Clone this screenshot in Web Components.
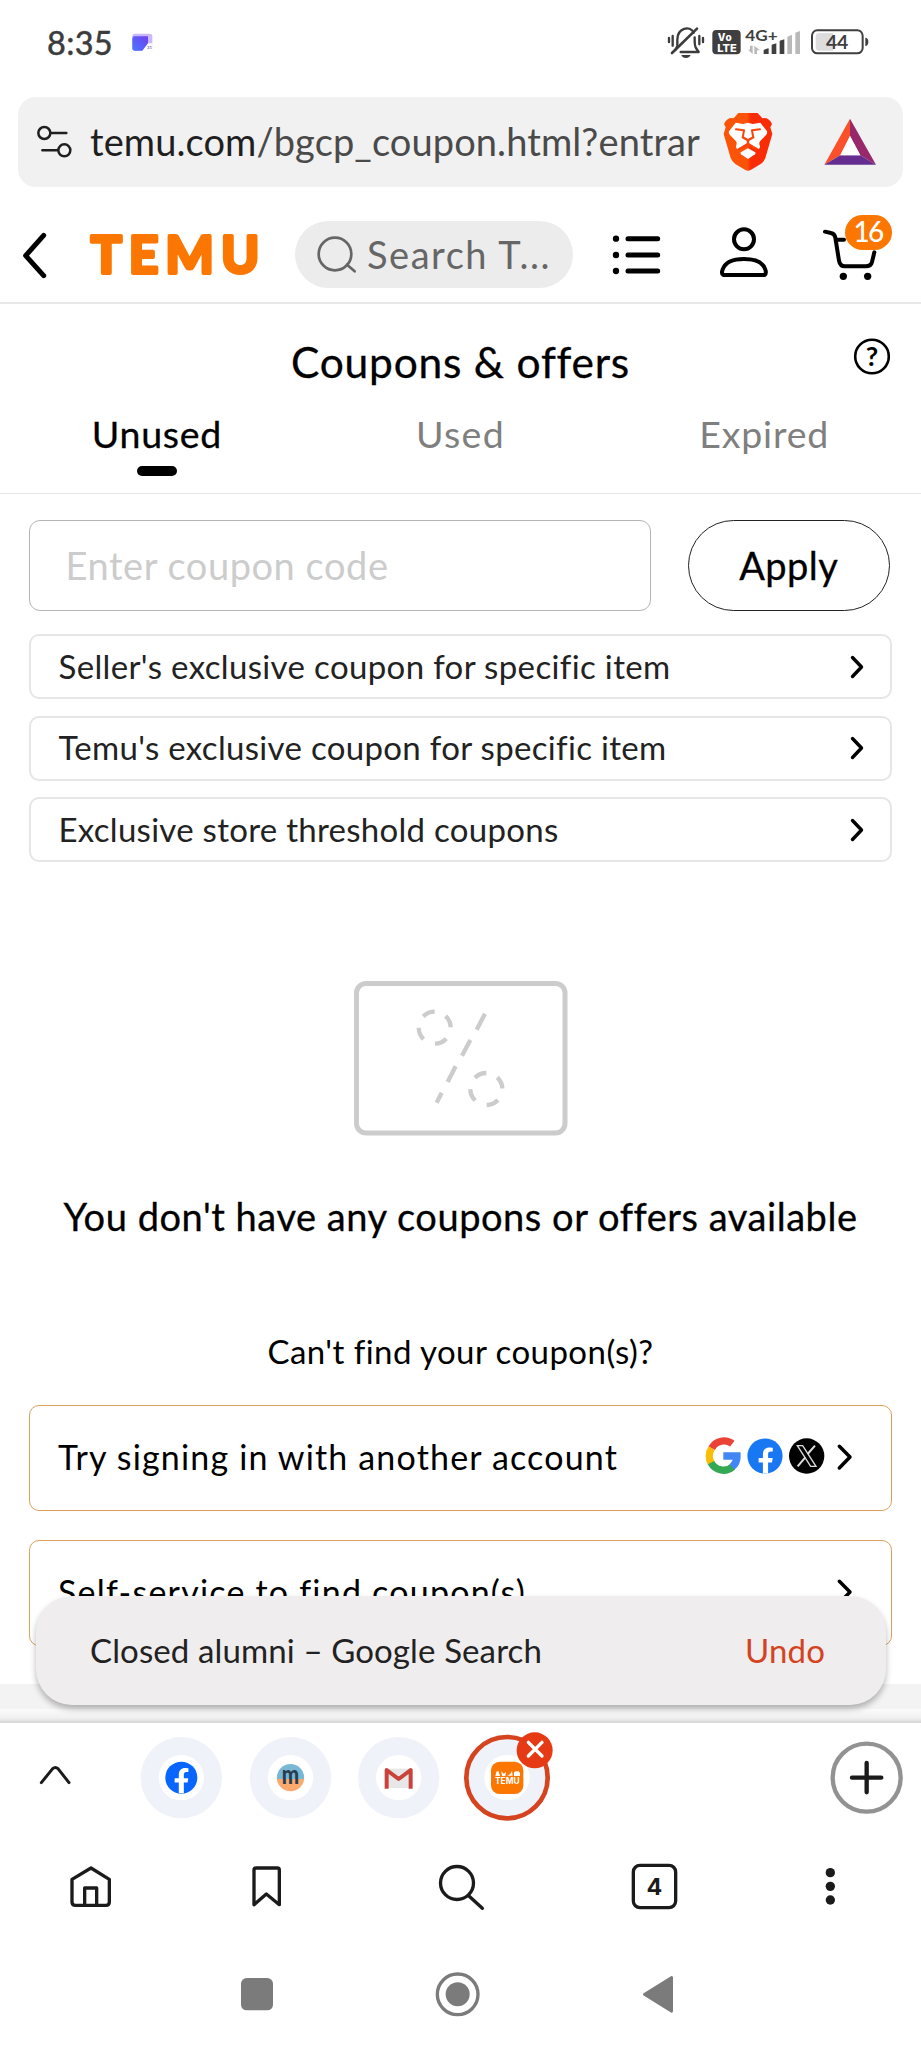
<!DOCTYPE html>
<html lang="en">
<head>
<meta charset="utf-8">
<title>Coupons &amp; offers</title>
<style>
html,body{margin:0;background:#fff}
body{font-family:Lato,"Liberation Sans",sans-serif;width:921px;height:2048px;overflow:hidden}
</style>
</head>
<body>
<phone-screen></phone-screen>
<script>
const TL='<g transform="scale(.33333)">';
const TR='<g transform="translate(460 0) scale(.33333)">';
const BL='<g transform="translate(0 1700) scale(.33333)">';
const BR='<g transform="translate(440 1700) scale(.33333)">';
const SG='<g transform="translate(660 1400) scale(.33333)">';
const S='fill="none" stroke-linecap="round" stroke-linejoin="round"';
const F='M26.5 18.5 25.8 23H21.9V34h-5.2V23h-4.3v-4.5h4.3v-3.6c0-4.6 2.6-7 6.6-7 1.7 0 3.3.3 3.3.3v3.9h-1.9c-2.1 0-2.8 1.2-2.8 2.6v3.8z';
/* name: [x, y, width, height, markup] */
const ICONS={
calendar:[130,0,24,84,TL+'<defs><linearGradient id="c" x1="0" y1="1" x2="1" y2="0"><stop offset="0" stop-color="#4a78ff"/><stop offset="1" stop-color="#7040f0"/></linearGradient></defs><rect x="397" y="101" width="60" height="52" rx="8" fill="#c9b8fa"/><path d="M404 109H444V134L428 152H404Q397 152 397 145V116Q397 109 404 109Z" fill="url(#c)"/><path d="M444 130H458V154H426Z" fill="#fff"/><text x="441" y="147" font-size="13" font-weight="700" fill="#7668b8" font-family="Lato">31</text></g>'],
bell:[665,0,42,84,TR+`<g ${S} stroke="#3c3c3c" stroke-width="7"><path d="M627 114V126M638 108V137M718 108V133M729 114V126"/><path d="M652 136V119C652 84 690 75 701 98M646 150 651 140M662 156H716L708 144Q704 138 704 121V112"/><path d="M711 86 636 159" stroke-width="8"/></g><path d="M664 165H692Q688 174 678 174 667 174 664 165Z" fill="#3c3c3c"/></g>`],
volte:[711,0,31,84,TR+'<rect x="757" y="90" width="85" height="73" rx="12" fill="#3f3f3f"/><g fill="#fff" font-family="Inter" font-weight="800"><text x="773" y="122" font-size="30" textLength="42">Vo</text><text x="772" y="155" font-size="31" textLength="58" lengthAdjust="spacingAndGlyphs">LTE</text></g></g>'],
signal:[744,0,58,84,TR+'<text x="856" y="122" font-family="Lato" font-weight="700" font-size="47" textLength="97" lengthAdjust="spacingAndGlyphs" fill="#3f3f3f">4G+</text><g fill="#404040"><path d="M911 162V150Q920 146 926 145V162ZM935 162V134L949 130V162ZM959 162V122L973 118V162Z"/></g><g fill="#b9b9b9"><path d="M982 162V110L996 104V162ZM1006 162V98L1020 93V162Z"/><path d="M870 137H878V162L864 149H870ZM883 137 900 151H891V162H883Z"/></g></g>'],
battery:[808,0,64,84,TR+'<rect x="1056" y="91" width="152" height="69" rx="16" fill="#fff" stroke="#3f3f3f" stroke-width="6"/><path d="M1078 99H1120V152H1078Q1067 152 1067 141V110Q1067 99 1078 99Z" fill="#ddd"/><path d="M1216 113Q1225 114 1225 125 1225 137 1216 138Z" fill="#3f3f3f"/><text x="1098" y="147" font-family="Lato" font-weight="700" font-size="58" textLength="67" fill="#3f3f3f">44</text></g>'],
tune:[36,97,37,90,TL+`<g ${S} stroke="#1f1f1f" stroke-width="7.5"><circle cx="133" cy="399" r="18"/><path d="M154 399H199M127 451H171"/><circle cx="193" cy="451" r="18"/></g></g>`],
brave:[720,97,56,90,TR+`<defs><linearGradient id="b"><stop offset=".48" stop-color="#fb5308"/><stop offset=".56" stop-color="#fa2c05"/></linearGradient></defs><path d="M835 339H893L907 355Q926 351 936 372L931 382 937 402 916 474Q912 485 902 492L872 510Q864 514 856 510L826 492Q816 485 812 474L791 402 797 382 792 372Q802 351 821 355Z" fill="url(#b)"/><path d="M827 368 850 372 864 368 878 372 901 368 921 394Q923 400 918 405L900 424Q896 430 900 439 901 444 896 447L883 440 868 430 864 428 860 430 845 440 832 447Q827 444 828 439 832 430 828 424L810 405Q805 400 807 394Z" fill="#fff"/><g ${S} stroke="#fb430a" stroke-width="6"><path d="M828 388 852 391 849 408M900 388 876 391 879 408"/><path d="M848 412 864 421 880 412M864 421V432M838 447 864 433 890 447" stroke-width="7"/></g><path d="M864 445 886 457Q888 460 885 463L864 477 843 463Q840 460 842 457Z" fill="#fff"/></g>`],
bat:[820,97,60,90,TR+'<path d="M1170 356V408L1141 466 1093 494Z" fill="#fb512b"/><path d="M1170 356 1248 494 1201 466 1170 408Z" fill="#97286a"/><path d="M1093 494 1141 466H1201L1248 494Z" fill="#662d91"/><path d="M1170 408 1201 466H1141Z" fill="#fff"/></g>'],
back:[20,187,30,115,TL+`<path ${S} stroke="#000" stroke-width="15" d="M131 706 77 767 131 827"/></g>`],
logo:[86,187,176,115,'<text x="91" y="273.3" textLength="168" font-family="Lato" font-weight="700" font-size="51" fill="#fb7701" stroke="#fb7701" stroke-width="4" stroke-linejoin="round">TEMU</text>'],
find:[315,221,42,67,TL+`<g ${S} stroke="#666" stroke-width="8"><circle cx="1005" cy="762" r="49"/><path d="M1041 794 1064 814"/></g></g>`],
list:[610,187,52,115,TR+`<g ${S} stroke="#000" stroke-width="15"><path d="M504 716H593M504 765H593M504 813H593"/></g><circle cx="468" cy="716" r="9.5"/><circle cx="468" cy="765" r="9.5"/><circle cx="468" cy="813" r="9.5"/></g>`],
person:[718,187,52,115,TR+`<g ${S} stroke="#000" stroke-width="12"><circle cx="852" cy="718" r="30"/><path d="M790 825H914Q920 820 916 809C909 787 883 777 852 777S795 787 788 809Q783 820 790 825Z"/></g></g>`],
cart:[820,187,74,115,TR+`<g ${S} stroke="#000" stroke-width="12"><path d="M1095 695 1113 699Q1124 701 1126 713L1137 782Q1140 799 1155 799H1217Q1233 799 1236 786L1243 757M1130 719H1152"/></g><circle cx="1150" cy="829" r="11"/><circle cx="1223" cy="829" r="11"/></g>`],
chev:[846,0,22,64,`<path ${S} stroke="#000" stroke-width="3.4" d="M852.5 22.5 861.5 32 852.5 41.5"/>`],
coupon:[354,981,214,155,`<rect x="356.5" y="983.5" width="208.5" height="149.5" rx="9.5" fill="none" stroke="#ccc" stroke-width="5"/><g transform="translate(330 960) scale(.33333)" fill="none" stroke="#ccc" stroke-width="13"><circle cx="314" cy="203" r="48" stroke-dasharray="37.7 37.7" transform="rotate(-47 314 203)"/><circle cx="469" cy="387" r="48" stroke-dasharray="37.7 37.7" transform="rotate(-47 469 387)"/><path d="M465 161 440 209M421 240 396 287M377 319 353 366M335 398 320 428"/></g>`],
google:[705,1405,36,105,SG+`<g fill="none" stroke-width="22"><path d="M217 131A42 42 0 0 0 155 145" stroke="#ea4335"/><path d="M155 145A42 42 0 0 0 154 190" stroke="#fbbc05"/><path d="M153 188A42 42 0 0 0 218 200" stroke="#34a853"/><path d="M190 168H231A41 41 0 0 1 216 201" stroke="#4285f4"/></g></g>`],
fb:[746,1405,38,105,'<g transform="translate(744.5 1435.5)"><circle cx="20.5" cy="20.5" r="17.6" fill="#1877f2"/><path fill="#fff" transform="translate(1.7 4)" d="'+F+'"/></g>'],
x:[788,1405,38,105,SG+'<circle cx="440" cy="168" r="53"/><g transform="translate(440 168)" fill="none" stroke="#ddd" stroke-width="4"><path d="M-28 -31H-12L28 31H12Z"/><path stroke-width="6" d="M25 -31 3 -6M-4 4 -27 31"/></g></g>'],
chev2:[832,1405,24,105,SG+`<path ${S} stroke="#000" stroke-width="10.5" d="M538 139 570 171 538 204"/></g>`],
up:[38,1723,35,115,BL+`<path ${S} stroke="#1b1b1b" stroke-width="9" d="M124 248 158 206Q166 199 174 206L207 248"/></g>`],
tfb:[140,1723,83,115,BL+'<circle cx="544" cy="233" r="122" fill="#eff2f8"/><circle cx="544" cy="233" r="68" fill="#fff"/><circle cx="544" cy="233" r="48" fill="#0866ff"/><path fill="#fff" transform="translate(488 181) scale(2.9)" d="'+F+'"/></g>'],
tm:[248.5,1723,83,115,BL+'<defs><linearGradient id="m" x2="0" y2="1"><stop offset=".55" stop-color="#79b8d4"/><stop offset=".56" stop-color="#fba96c"/></linearGradient></defs><circle cx="870" cy="233" r="122" fill="#eff2f8"/><circle cx="870" cy="233" r="68" fill="#fff"/><circle cx="870" cy="233" r="41" fill="url(#m)"/><text x="844" y="252" textLength="52" lengthAdjust="spacingAndGlyphs" font-family="Lato" font-weight="900" font-size="77" fill="#273d50">m</text></g>'],
tgm:[357,1723,83,115,BL+'<circle cx="1196" cy="233" r="122" fill="#eff2f8"/><circle cx="1196" cy="233" r="68" fill="#fff"/><path d="M1160 206H1232V264H1160Z" fill="#e7e7e7"/><path d="M1160 266V210L1196 237 1232 210V266" fill="none" stroke="#c9433b" stroke-width="12" stroke-linejoin="round"/></g>'],
ttemu:[462,1723,92,115,BR+`<circle cx="201" cy="233" r="122" fill="#eff2f8" stroke="#d5431f" stroke-width="14"/><circle cx="201" cy="233" r="68" fill="#fff"/><rect x="153" y="185" width="97" height="97" rx="26" fill="#fb7701"/><text x="165" y="252" font-family="Inter" font-weight="700" font-size="25" textLength="74" lengthAdjust="spacingAndGlyphs" fill="#fff">TEMU</text><path fill="#fff" d="M170 214H176L180 228H166ZM184 214 191 221 198 216 196 228H186ZM200 227Q211 226 216 213L218 227ZM222 217 228 214H236L240 219V228H222Z"/><circle cx="284" cy="151" r="54" fill="#e63a14"/><path ${S} stroke="#fff" stroke-width="10" d="M265 127 306 168M306 127 265 168"/></g>`],
plus:[829,1723,75,115,BR+`<g ${S}><circle cx="1280" cy="233" r="102" stroke="#929292" stroke-width="13"/><path stroke="#1b1b1b" stroke-width="13" d="M1236 233H1324M1280 189V277"/></g></g>`],
home:[68,1838,45,96,BL+`<path ${S} stroke="#1b1b1b" stroke-width="10" d="M226 616H318Q328 616 328 606V538L273 504 216 538V606Q216 616 226 616ZM254 614V564H290V614"/></g>`],
mark:[249,1838,35,96,BL+`<path ${S} stroke="#1b1b1b" stroke-width="10" d="M768 504H832Q838 504 838 510V614L799 582 762 614V510Q762 504 768 504Z"/></g>`],
search:[437,1838,50,96,BR+`<g ${S} stroke="#1b1b1b" stroke-width="10"><circle cx="51" cy="549" r="49.5"/><path d="M86 587 127 625"/></g></g>`],
tabs:[630,1838,49,96,BR+'<rect x="580" y="496" width="127" height="127" rx="20" fill="none" stroke="#1b1b1b" stroke-width="10"/><text x="643.5" y="585" text-anchor="middle" font-family="Inter" font-weight="700" font-size="70" fill="#1b1b1b">4</text></g>'],
dots:[824,1838,14,96,BR+'<g fill="#1b1b1b"><circle cx="1171" cy="518" r="14"/><circle cx="1171" cy="559" r="14"/><circle cx="1171" cy="600" r="14"/></g></g>'],
nsq:[240,1934,34,114,BL+'<rect x="723" y="834" width="96" height="97" rx="17" fill="#7b7b7b"/></g>'],
nci:[434,1934,47,114,BR+'<circle cx="53" cy="883" r="61" fill="none" stroke="#7b7b7b" stroke-width="10"/><circle cx="53" cy="883" r="36" fill="#7b7b7b"/></g>'],
ntr:[641,1934,34,114,BR+'<path d="M613 883 695 832V934Z" fill="#7b7b7b" stroke="#7b7b7b" stroke-width="8" stroke-linejoin="round"/></g>'],
help:[853,335,38,44,'<circle cx="872" cy="356.5" r="16.8" fill="none" stroke="#000" stroke-width="2.6"/><text x="872" y="365.5" text-anchor="middle" font-family="Lato" font-weight="700" font-size="27">?</text>']
};
customElements.define('ui-icon',class extends HTMLElement{
  connectedCallback(){
    const [x,y,w,h,m]=ICONS[this.getAttribute('name')];
    this.attachShadow({mode:'open'}).innerHTML=`<style>:host{display:block;flex:none;width:${w}px;height:${h}px}svg{display:block}</style><svg width="${w}" height="${h}" viewBox="${x} ${y} ${w} ${h}">${m}</svg>`;
  }
});
/* One line of text, tracked so that it fills the width given in "w". */
customElements.define('fit-text',class extends HTMLElement{
  connectedCallback(){
    const s=this.getAttribute('size'),w=+this.getAttribute('w'),up=this.getAttribute('up')||0;
    this.attachShadow({mode:'open'}).innerHTML=`<style>:host{display:block;flex:none;white-space:nowrap;font-size:${s}px;line-height:${Math.round(s*1.2)}px;width:${w}px;font-variant-ligatures:none}span{display:inline-block;margin-bottom:${up}px}</style><span><slot></slot></span>`;
    const sp=this.shadowRoot.querySelector('span');
    const n=this.textContent.length;
    sp.style.letterSpacing=((w-sp.getBoundingClientRect().width)/n).toFixed(3)+'px';
  }
});
function define(name,css,html){
  customElements.define(name,class extends HTMLElement{
    constructor(){super();this.attachShadow({mode:'open'}).innerHTML=`<style>${css}</style>${html}`}
  });
}
define('status-bar',':host{display:flex;align-items:center;height:84px;color:#3c3c3c;font-weight:500}',
`<fit-text size="32.5" w="66" style="margin-left:47px;-webkit-text-stroke:.3px">8:35</fit-text><ui-icon name="calendar" style="margin-left:17px"></ui-icon><ui-icon name="bell" style="margin-left:511px"></ui-icon><ui-icon name="volte" style="margin-left:4px"></ui-icon><ui-icon name="signal" style="margin-left:2px"></ui-icon><ui-icon name="battery" style="margin-left:6px"></ui-icon>`);
define('url-bar',':host{display:flex;align-items:center;height:90px;margin:13px 18px 0;border-radius:18px;background:#f1f1f1;color:#1f1f1f}i{font-style:normal;color:#4a4a4a}',
`<ui-icon name="tune" style="margin-left:18px"></ui-icon><fit-text size="38" w="610" up="2" style="margin-left:17px">temu.com<i>/bgcp_coupon.html?entrar</i></fit-text><ui-icon name="brave" style="margin-left:20px"></ui-icon><ui-icon name="bat" style="margin-left:44px"></ui-icon>`);
define('shop-header',':host{display:flex;align-items:center;height:115px;border-bottom:2px solid #e8e8e8}.pill{display:flex;align-items:center;width:278px;height:67px;margin:34px 0 0 33px;border-radius:34px;background:#ececec;color:#666;align-self:flex-start}.cart{position:relative;margin-left:50px}.badge{position:absolute;left:24.5px;top:28px;width:47px;height:34.5px;border-radius:18px;background:#fb7701;color:#fff;font-weight:500;display:flex;align-items:center;justify-content:center}',
`<ui-icon name="back" style="margin-left:20px"></ui-icon><ui-icon name="logo" style="margin-left:36px"></ui-icon><div class="pill"><ui-icon name="find" style="margin-left:20px"></ui-icon><fit-text size="38" w="184" up="2" style="margin-left:10px">Search T...</fit-text></div><ui-icon name="list" style="margin-left:37px"></ui-icon><ui-icon name="person" style="margin-left:56px"></ui-icon><div class="cart"><ui-icon name="cart"></ui-icon><div class="badge"><fit-text size="28" w="29" up="2">16</fit-text></div></div>`);
define('page-title',':host{display:flex;height:84px;align-items:flex-start;color:#000}',
`<fit-text size="42.5" w="339" style="margin:31.5px 0 0 291px;-webkit-text-stroke:.3px">Coupons &amp; offers</fit-text><ui-icon name="help" style="margin:31px 0 0 223px"></ui-icon>`);
define('coupon-tabs',':host{display:grid;grid-template-columns:repeat(3,1fr);height:106px;padding:0 5px;border-bottom:1px solid #e6e6e6;color:#7f7f7f}div{display:flex;flex-direction:column;align-items:center;padding-top:23.5px}.on{color:#000;-webkit-text-stroke:.3px}.on:after{content:"";width:40px;height:10px;border-radius:5px;background:#000;margin-top:9.5px}',
`<div class="on"><fit-text size="37.5" w="130">Unused</fit-text></div><div><fit-text size="37.5" w="89">Used</fit-text></div><div><fit-text size="37.5" w="130">Expired</fit-text></div>`);
define('code-form',':host{display:flex;height:91.5px;padding:25.5px 0 0 29px;gap:36.5px}div{box-sizing:border-box;height:91.5px;display:flex;align-items:center}.in{width:622px;border:1.4px solid #b5b5b5;border-radius:11px;color:#ccc;padding-left:35.5px}.go{width:202.5px;border:1.5px solid #222;border-radius:46px;justify-content:center;color:#000;-webkit-text-stroke:.3px}',
`<div class="in"><fit-text size="38" w="323" up="1">Enter coupon code</fit-text></div><div class="go"><fit-text size="38" w="99" up="1">Apply</fit-text></div>`);
define('coupon-row',':host{display:flex;box-sizing:border-box;height:65px;margin:0 29px 16.3px;border:2px solid #e6e6e6;border-radius:10px;color:#222;align-items:center;justify-content:space-between;padding:0 22px 0 27.5px}','<slot></slot><ui-icon name="chev"></ui-icon>');
define('empty-state',':host{display:flex;flex-direction:column;align-items:center;color:#000}',
`<ui-icon name="coupon"></ui-icon><fit-text size="38" w="794" style="margin-top:57px;-webkit-text-stroke:.3px">You don't have any coupons or offers available</fit-text><fit-text size="33" w="386" style="margin:91.5px 0 1.5px">Can't find your coupon(s)?</fit-text>`);
define('action-box',':host{display:flex;box-sizing:border-box;height:105.5px;margin:0 29px 29.5px;border:1.7px solid #dca25c;border-radius:10px;color:#000;align-items:center;padding:0 35px 0 28px}::slotted(fit-text){margin-right:auto}','<slot></slot><slot name="end"></slot><ui-icon name="chev2" style="margin-left:6px"></ui-icon>');
define('snack-bar',':host{display:flex;align-items:center;position:absolute;left:36px;top:1596px;width:850px;height:109px;box-sizing:border-box;border-radius:36px;background:#efeded;color:#222;box-shadow:0 4px 6px rgba(0,0,0,.28);padding:0 61px 0 54px;justify-content:space-between}b{font-weight:400;color:#d4431f}',
`<fit-text size="33" w="452" up="1">Closed alumni – Google Search</fit-text><b><fit-text size="33" w="80" up="1">Undo</fit-text></b>`);
define('tab-strip',':host{display:flex;height:115px;background:#fff}',
`<ui-icon name="up" style="margin-left:38px"></ui-icon><ui-icon name="tfb" style="margin-left:67px"></ui-icon><ui-icon name="tm" style="margin-left:25.5px"></ui-icon><ui-icon name="tgm" style="margin-left:25.5px"></ui-icon><ui-icon name="ttemu" style="margin-left:22px"></ui-icon><ui-icon name="plus" style="margin-left:275px"></ui-icon>`);
define('tool-bar',':host{display:flex;height:96px}',
`<ui-icon name="home" style="margin-left:68px"></ui-icon><ui-icon name="mark" style="margin-left:136px"></ui-icon><ui-icon name="search" style="margin-left:153px"></ui-icon><ui-icon name="tabs" style="margin-left:143px"></ui-icon><ui-icon name="dots" style="margin-left:145px"></ui-icon>`);
define('nav-bar',':host{display:flex;height:114px}',
`<ui-icon name="nsq" style="margin-left:240px"></ui-icon><ui-icon name="nci" style="margin-left:160px"></ui-icon><ui-icon name="ntr" style="margin-left:160px"></ui-icon>`);
define('phone-screen',`:host{display:flex;flex-direction:column;position:relative;width:921px;height:2048px;background:#fff;overflow:hidden}
main{display:flex;flex-direction:column;height:1419px;flex:none;overflow:hidden}.rows{padding-top:23px}empty-state{margin-top:102.7px}.acts{padding-top:33px}
.rows fit-text,.acts fit-text{margin-bottom:2px}
.band{height:25px;flex:none;background:#f3f3f3;margin-top:9px}.edge{height:14px;flex:none;background:linear-gradient(#fbfbfb,#f0f0f0 65%,#d4d4d4)}`,
`<status-bar></status-bar><url-bar></url-bar><shop-header></shop-header>
<main><page-title></page-title><coupon-tabs></coupon-tabs><code-form></code-form>
<div class="rows"><coupon-row><fit-text size="33" w="612">Seller's exclusive coupon for specific item</fit-text></coupon-row><coupon-row><fit-text size="33" w="608">Temu's exclusive coupon for specific item</fit-text></coupon-row><coupon-row><fit-text size="33" w="500">Exclusive store threshold coupons</fit-text></coupon-row></div>
<empty-state></empty-state>
<div class="acts"><action-box><fit-text size="34" w="560">Try signing in with another account</fit-text><ui-icon slot="end" name="google"></ui-icon><ui-icon slot="end" name="fb" style="margin-left:5px"></ui-icon><ui-icon slot="end" name="x" style="margin-left:4px"></ui-icon></action-box><action-box><fit-text size="34" w="468">Self-service to find coupon(s)</fit-text></action-box></div>
<div class="band"></div><div class="edge"></div></main>
<tab-strip></tab-strip><tool-bar></tool-bar><nav-bar></nav-bar><snack-bar></snack-bar>`);
</script>
</body>
</html>
